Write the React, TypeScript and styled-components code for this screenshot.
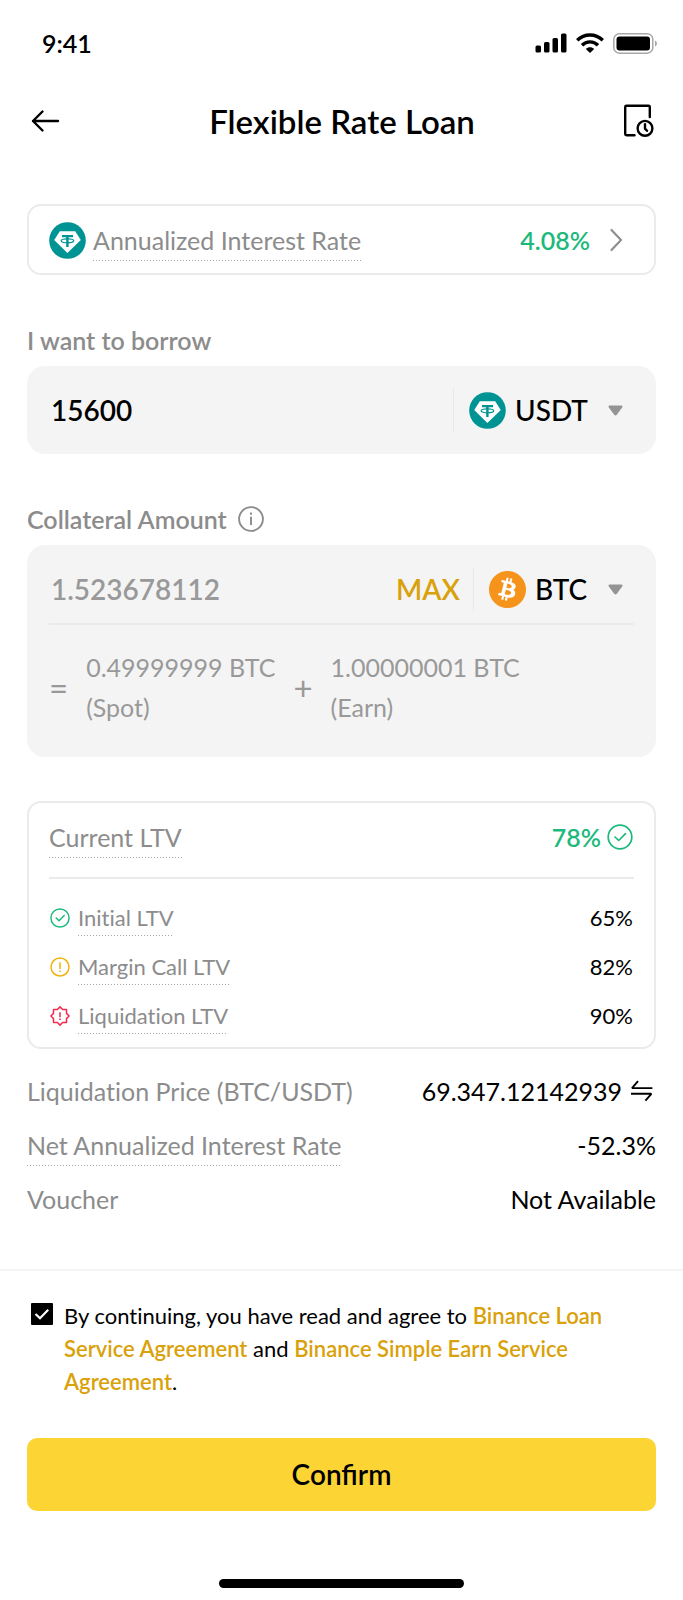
import React, { useState } from 'react';
import styled, { createGlobalStyle } from 'styled-components';
import { SiBitcoin } from 'react-icons/si';

const c = {
  ink: '#000000',
  muted: '#8c8c8c',
  soft: '#999999',
  green: '#1cb97d',
  gold: '#d9a10a',
  amber: '#efb40b',
  red: '#f6294e',
  yellow: '#fcd434',
  field: '#f4f4f4',
  line: '#ebebeb',
};

const GlobalStyle = createGlobalStyle`
  *, *::before, *::after { box-sizing: border-box; }
  body { margin: 0; background: #fff; }
  body, button, input, select { font-family: Lato, "Liberation Sans", sans-serif; }
  svg { display: block; flex: none; }
`;

const Screen = styled.div`
  min-height: 100vh;
  display: flex;
  flex-direction: column;
  color: ${c.ink};
  font-size: 25px;
  line-height: 32px;
  font-variant-ligatures: none;
`;

const StatusBar = styled.div`
  display: flex;
  align-items: center;
  justify-content: space-between;
  padding: 27px 25px 28px 42px;
`;

const Time = styled.time`
  font-weight: 600;
`;

const StatusIcons = styled.div`
  display: flex;
  align-items: center;
  gap: 9px;
`;

const Header = styled.header`
  display: grid;
  grid-template-columns: 1fr auto 1fr;
  align-items: center;
  padding: 14px 28px 13px 29px;
`;

const Title = styled.h1`
  margin: 0;
  font-size: 33px;
  line-height: 40px;
  font-weight: 600;
`;

const IconButton = styled.button<{ $end?: boolean }>`
  display: flex;
  padding: 0;
  border: 0;
  background: none;
  color: inherit;
  cursor: pointer;
  justify-self: ${p => (p.$end ? 'end' : 'start')};
`;

const Main = styled.main`
  display: flex;
  flex-direction: column;
  padding: 50px 27px 49px;
`;

const RateCard = styled.button`
  display: flex;
  align-items: center;
  width: 100%;
  padding: 13px 31px 12px 20px;
  border: 2px solid ${c.line};
  border-radius: 14px;
  background: #fff;
  font-size: 25px;
  line-height: 32px;
  text-align: left;
  cursor: pointer;
`;

const Hint = styled.span<{ $small?: boolean }>`
  padding: ${p => (p.$small ? '3px 0' : '5px 0')};
  color: ${c.muted};
  background: repeating-linear-gradient(90deg, #a6a6a6 0 1px, transparent 1px 3px) left bottom / 100% 1px no-repeat;
`;

const RateLabel = styled(Hint)`
  margin: 0 auto 0 7px;
`;

const Rate = styled.span`
  margin-right: 19px;
  color: ${c.green};
  font-weight: 600;
`;

const FieldLabel = styled.div`
  display: flex;
  align-items: center;
  gap: 11px;
  margin: 49px 0 10px;
  color: ${c.muted};
  font-weight: 600;
`;

const FieldBox = styled.div`
  border-radius: 18px;
  background: ${c.field};
`;

const FieldRow = styled.div<{ $compact?: boolean }>`
  display: flex;
  align-items: center;
  padding: 22px 33px ${p => (p.$compact ? 12 : 22)}px 24px;
`;

const AmountInput = styled.input<{ $muted?: boolean }>`
  flex: 1;
  min-width: 0;
  padding: 0;
  border: 0;
  outline: 0;
  background: none;
  font-size: 28px;
  line-height: 36px;
  font-weight: 600;
  color: ${p => (p.$muted ? c.soft : c.ink)};
`;

const MaxButton = styled.button`
  padding: 0;
  margin-right: 13px;
  border: 0;
  background: none;
  color: ${c.gold};
  font-size: 28px;
  line-height: 36px;
  font-weight: 600;
  cursor: pointer;
`;

const Coin = styled.div`
  display: flex;
  align-items: center;
  height: 44px;
  padding-left: 15px;
  border-left: 1px solid #e8e8e8;
`;

const SelectWrap = styled.div`
  display: grid;
  align-items: center;
  margin-left: 9px;
  > * { grid-area: 1 / 1; }
  > svg { justify-self: end; pointer-events: none; }
`;

const CoinSelect = styled.select`
  appearance: none;
  padding: 0 35px 0 0;
  border: 0;
  outline: 0;
  background: none;
  color: ${c.ink};
  font-size: 28px;
  line-height: 36px;
  font-weight: 500;
`;

const Breakdown = styled.div`
  display: flex;
  align-items: center;
  gap: 18px;
  margin: 0 22px;
  padding: 22px 0 30px;
  border-top: 2px solid #ebebeb;
  color: ${c.soft};
  line-height: 40px;
`;

const Operator = styled.span`
  font-size: 33px;
`;

const Source = styled.span`
  display: block;
`;

const LtvCard = styled.section`
  margin-top: 44px;
  padding: 13px 20px;
  border: 2px solid ${c.line};
  border-radius: 14px;
`;

const LtvHead = styled.div`
  display: flex;
  align-items: center;
  justify-content: space-between;
  padding-bottom: 19px;
  border-bottom: 2px solid ${c.line};
`;

const LtvNow = styled.strong`
  display: flex;
  align-items: center;
  gap: 6px;
  padding-right: 1px;
  color: ${c.green};
  font-weight: 600;
`;

const LtvList = styled.dl`
  display: flex;
  flex-direction: column;
  gap: 13px;
  margin: 0;
  padding: 21px 1px 0;
  font-size: 22px;
  line-height: 30px;
`;

const Row = styled.div`
  display: flex;
  align-items: center;
  justify-content: space-between;
`;

const Term = styled.dt`
  display: flex;
  align-items: center;
  gap: 8px;
  color: ${c.muted};
`;

const Value = styled.dd`
  display: flex;
  align-items: center;
  gap: 8px;
  margin: 0;
`;

const Details = styled.dl`
  display: flex;
  flex-direction: column;
  gap: 12px;
  margin: 21px 0 0;
`;

const DetailRow = styled(Row)`
  min-height: 42px;
`;

const Footer = styled.footer`
  display: flex;
  flex-direction: column;
  padding: 28px 27px 15px;
  border-top: 2px solid #f5f5f5;
`;

const Consent = styled.div`
  display: flex;
  align-items: flex-start;
  gap: 11px;
  padding: 0 4px;
  font-size: 22px;
  line-height: 33px;
`;

const CheckWrap = styled.span`
  display: grid;
  place-items: center;
  flex: none;
  margin-top: 4px;
  > * { grid-area: 1 / 1; }
  > svg { pointer-events: none; }
`;

const Checkbox = styled.input`
  appearance: none;
  width: 22px;
  height: 22px;
  margin: 0;
  border: 2px solid ${c.ink};
  border-radius: 1px;
  &:checked { background: ${c.ink}; }
`;

const Link = styled.a`
  color: ${c.gold};
  font-weight: 600;
  text-decoration: none;
`;

const Confirm = styled.button`
  margin-top: 40px;
  padding: 18px;
  border: 0;
  border-radius: 10px;
  background: ${c.yellow};
  color: ${c.ink};
  font-size: 28px;
  line-height: 37px;
  font-weight: 600;
  cursor: pointer;
`;

const HomeBar = styled.div`
  width: 39%;
  height: 9px;
  margin: 68px auto 0;
  border-radius: 5px;
  background: ${c.ink};
`;

const Signal = () => (
  <svg width="32" height="20" viewBox="0 0 32 20">
    <rect x="0.5" y="12.5" width="5.5" height="7" rx="1.5" />
    <rect x="9" y="9" width="5.5" height="10.5" rx="1.5" />
    <rect x="17.5" y="5" width="5.5" height="14.5" rx="1.5" />
    <rect x="26" y="0.5" width="5.5" height="19" rx="1.5" />
  </svg>
);

const Wifi = () => (
  <svg width="28" height="20" viewBox="0 0 28 20" fill="none" stroke="#000" strokeWidth="3.4">
    <path d="M1.2 7.2C8.5 0.2 19.5 0.2 26.8 7.2" />
    <path d="M6 12.2C10.5 7.8 17.5 7.8 22 12.2" />
    <path d="M9.8 15.9C12.2 13.7 15.8 13.7 18.2 15.9L14 20Z" fill="#000" stroke="none" />
  </svg>
);

const Battery = () => (
  <svg width="45" height="21" viewBox="0 0 45 21">
    <rect x="0.8" y="0.8" width="39" height="19.4" rx="5.5" fill="none" stroke="#a8a8a8" strokeWidth="1.5" />
    <rect x="3.5" y="3.5" width="33.5" height="14" rx="3" />
    <path d="M42 7.5C44.6 8.4 44.6 12.6 42 13.5Z" fill="#a8a8a8" />
  </svg>
);

const BackArrow = () => (
  <svg width="31" height="24" viewBox="0 0 31 24" fill="none" stroke="#000" strokeWidth="2.4" strokeLinecap="round" strokeLinejoin="round">
    <path d="M13.5 2.5L4 12L13.5 21.5M4 12H29" />
  </svg>
);

const History = () => (
  <svg width="32" height="36" viewBox="0 0 32 36" fill="none" stroke="#000" strokeWidth="2.4" strokeLinecap="round" strokeLinejoin="round">
    <path d="M11.5 32.2H3.5Q2.2 32.2 2.2 31V4Q2.2 2.8 3.5 2.8H25.6Q26.8 2.8 26.8 4V14" />
    <circle cx="22" cy="25.3" r="7.4" />
    <path d="M22 21.3V25.6L24 27.8" />
  </svg>
);

const Tether = () => (
  <svg width="37" height="37" viewBox="0 0 37 37">
    <circle cx="18.5" cy="18.5" r="18.3" fill="#009393" />
    <path d="M10.8 9.3H26.2L31.8 18L18.4 31L5.2 18Z" fill="#fff" />
    <path d="M13 13H24V15.2H19.6V25H17.2V15.2H13Z" fill="#009393" />
    <ellipse cx="18.4" cy="18.8" rx="6.3" ry="2" fill="none" stroke="#009393" strokeWidth="1.2" />
  </svg>
);

const Bitcoin = () => (
  <svg width="37" height="37" viewBox="0 0 37 37">
    <circle cx="18.5" cy="18.5" r="14" fill="#fff" />
    <SiBitcoin size={37} color="#f6931a" />
  </svg>
);

const Chevron = () => (
  <svg width="14" height="24" viewBox="0 0 14 24" fill="none" stroke="#8f8f8f" strokeWidth="2.2" strokeLinecap="round" strokeLinejoin="round">
    <path d="M2.5 2L12 12L2.5 22" />
  </svg>
);

const Caret = () => (
  <svg width="15" height="11" viewBox="0 0 15 11" fill="#949494">
    <path d="M1.6 0.5H13.4Q15 0.8 14.2 2.4L8.8 9.8Q7.5 11.2 6.2 9.8L0.8 2.4Q0 0.8 1.6 0.5Z" />
  </svg>
);

const Info = () => (
  <svg width="26" height="26" viewBox="0 0 26 26" fill="none" stroke="#8c8c8c" strokeWidth="1.9">
    <circle cx="13" cy="13" r="11.9" />
    <path d="M13 10.8V19M13 6.5V8.8" />
  </svg>
);

const CheckCircle = ({ size, weight }: { size: number; weight: number }) => (
  <svg width={size} height={size} viewBox="0 0 26 26" fill="none" stroke={c.green} strokeWidth={weight} strokeLinecap="round" strokeLinejoin="round">
    <circle cx="13" cy="13" r="11.8" />
    <path d="M8 13L11.7 16.5L18.5 9.7" />
  </svg>
);

const AlertCircle = () => (
  <svg width="20" height="20" viewBox="0 0 20 20" fill="none" stroke={c.amber} strokeWidth="1.5">
    <circle cx="10" cy="10" r="9" />
    <path d="M10 5.2V12M10 13.4V15" />
  </svg>
);

const AlertBadge = () => (
  <svg width="20" height="20" viewBox="0 0 20 20" fill="none" stroke={c.red} strokeWidth="1.5" strokeLinejoin="round">
    <path d="M10 0.9L12.6 3.5H16.5V7.4L19.1 10L16.5 12.6V16.5H12.6L10 19.1L7.4 16.5H3.5V12.6L0.9 10L3.5 7.4V3.5H7.4Z" />
    <path d="M10 6.2V11.3M10 12.4V14" />
  </svg>
);

const Swap = () => (
  <svg width="26" height="22" viewBox="0 0 26 22" fill="none" stroke="#000" strokeWidth="1.9" strokeLinejoin="bevel">
    <path d="M8 1.2L2 8.1H22.4M1 13.8H21.4L15.4 20.6" />
  </svg>
);

const CheckMark = () => (
  <svg width="16" height="14" viewBox="0 0 16 14" fill="none" stroke="#fff" strokeWidth="2.2">
    <path d="M1.5 7L6 11.3L14.2 2.8" />
  </svg>
);

const ltvRows = [
  { label: 'Initial LTV', value: '65%', icon: <CheckCircle size={20} weight={1.9} /> },
  { label: 'Margin Call LTV', value: '82%', icon: <AlertCircle /> },
  { label: 'Liquidation LTV', value: '90%', icon: <AlertBadge /> },
];

export default function App() {
  const [borrow, setBorrow] = useState('15600');
  const [collateral, setCollateral] = useState('1.523678112');
  const [agreed, setAgreed] = useState(true);

  return (
    <Screen>
      <GlobalStyle />
      <StatusBar>
        <Time>9:41</Time>
        <StatusIcons>
          <Signal />
          <Wifi />
          <Battery />
        </StatusIcons>
      </StatusBar>
      <Header>
        <IconButton aria-label="Back"><BackArrow /></IconButton>
        <Title>Flexible Rate Loan</Title>
        <IconButton $end aria-label="Loan history"><History /></IconButton>
      </Header>

      <Main>
        <RateCard>
          <Tether />
          <RateLabel>Annualized Interest Rate</RateLabel>
          <Rate>4.08%</Rate>
          <Chevron />
        </RateCard>

        <FieldLabel><label htmlFor="borrow">I want to borrow</label></FieldLabel>
        <FieldBox>
          <FieldRow>
            <AmountInput id="borrow" inputMode="decimal" value={borrow} onChange={e => setBorrow(e.target.value)} />
            <Coin>
              <Tether />
              <SelectWrap>
                <CoinSelect aria-label="Borrowed coin"><option>USDT</option></CoinSelect>
                <Caret />
              </SelectWrap>
            </Coin>
          </FieldRow>
        </FieldBox>

        <FieldLabel>
          <label htmlFor="collateral">Collateral Amount</label>
          <Info />
        </FieldLabel>
        <FieldBox>
          <FieldRow $compact>
            <AmountInput id="collateral" $muted inputMode="decimal" value={collateral} onChange={e => setCollateral(e.target.value)} />
            <MaxButton>MAX</MaxButton>
            <Coin>
              <Bitcoin />
              <SelectWrap>
                <CoinSelect aria-label="Collateral coin"><option>BTC</option></CoinSelect>
                <Caret />
              </SelectWrap>
            </Coin>
          </FieldRow>
          <Breakdown>
            <Operator>=</Operator>
            <span>0.49999999 BTC<Source>(Spot)</Source></span>
            <Operator>+</Operator>
            <span>1.00000001 BTC<Source>(Earn)</Source></span>
          </Breakdown>
        </FieldBox>

        <LtvCard>
          <LtvHead>
            <Hint>Current LTV</Hint>
            <LtvNow>78%<CheckCircle size={26} weight={1.7} /></LtvNow>
          </LtvHead>
          <LtvList>
            {ltvRows.map(r => (
              <Row key={r.label}>
                <Term>{r.icon}<Hint $small>{r.label}</Hint></Term>
                <Value>{r.value}</Value>
              </Row>
            ))}
          </LtvList>
        </LtvCard>

        <Details>
          <DetailRow>
            <Term>Liquidation Price (BTC/USDT)</Term>
            <Value>69.347.12142939<IconButton aria-label="Swap price pair"><Swap /></IconButton></Value>
          </DetailRow>
          <DetailRow>
            <Term><Hint>Net Annualized Interest Rate</Hint></Term>
            <Value>-52.3%</Value>
          </DetailRow>
          <DetailRow>
            <Term>Voucher</Term>
            <Value>Not Available</Value>
          </DetailRow>
        </Details>
      </Main>

      <Footer>
        <Consent>
          <CheckWrap>
            <Checkbox id="agree" type="checkbox" checked={agreed} onChange={e => setAgreed(e.target.checked)} />
            {agreed && <CheckMark />}
          </CheckWrap>
          <label htmlFor="agree">
            By continuing, you have read and agree to <Link href="#loan">Binance Loan Service Agreement</Link> and{' '}
            <Link href="#earn">Binance Simple Earn Service Agreement</Link>.
          </label>
        </Consent>
        <Confirm>Confirm</Confirm>
        <HomeBar />
      </Footer>
    </Screen>
  );
}
